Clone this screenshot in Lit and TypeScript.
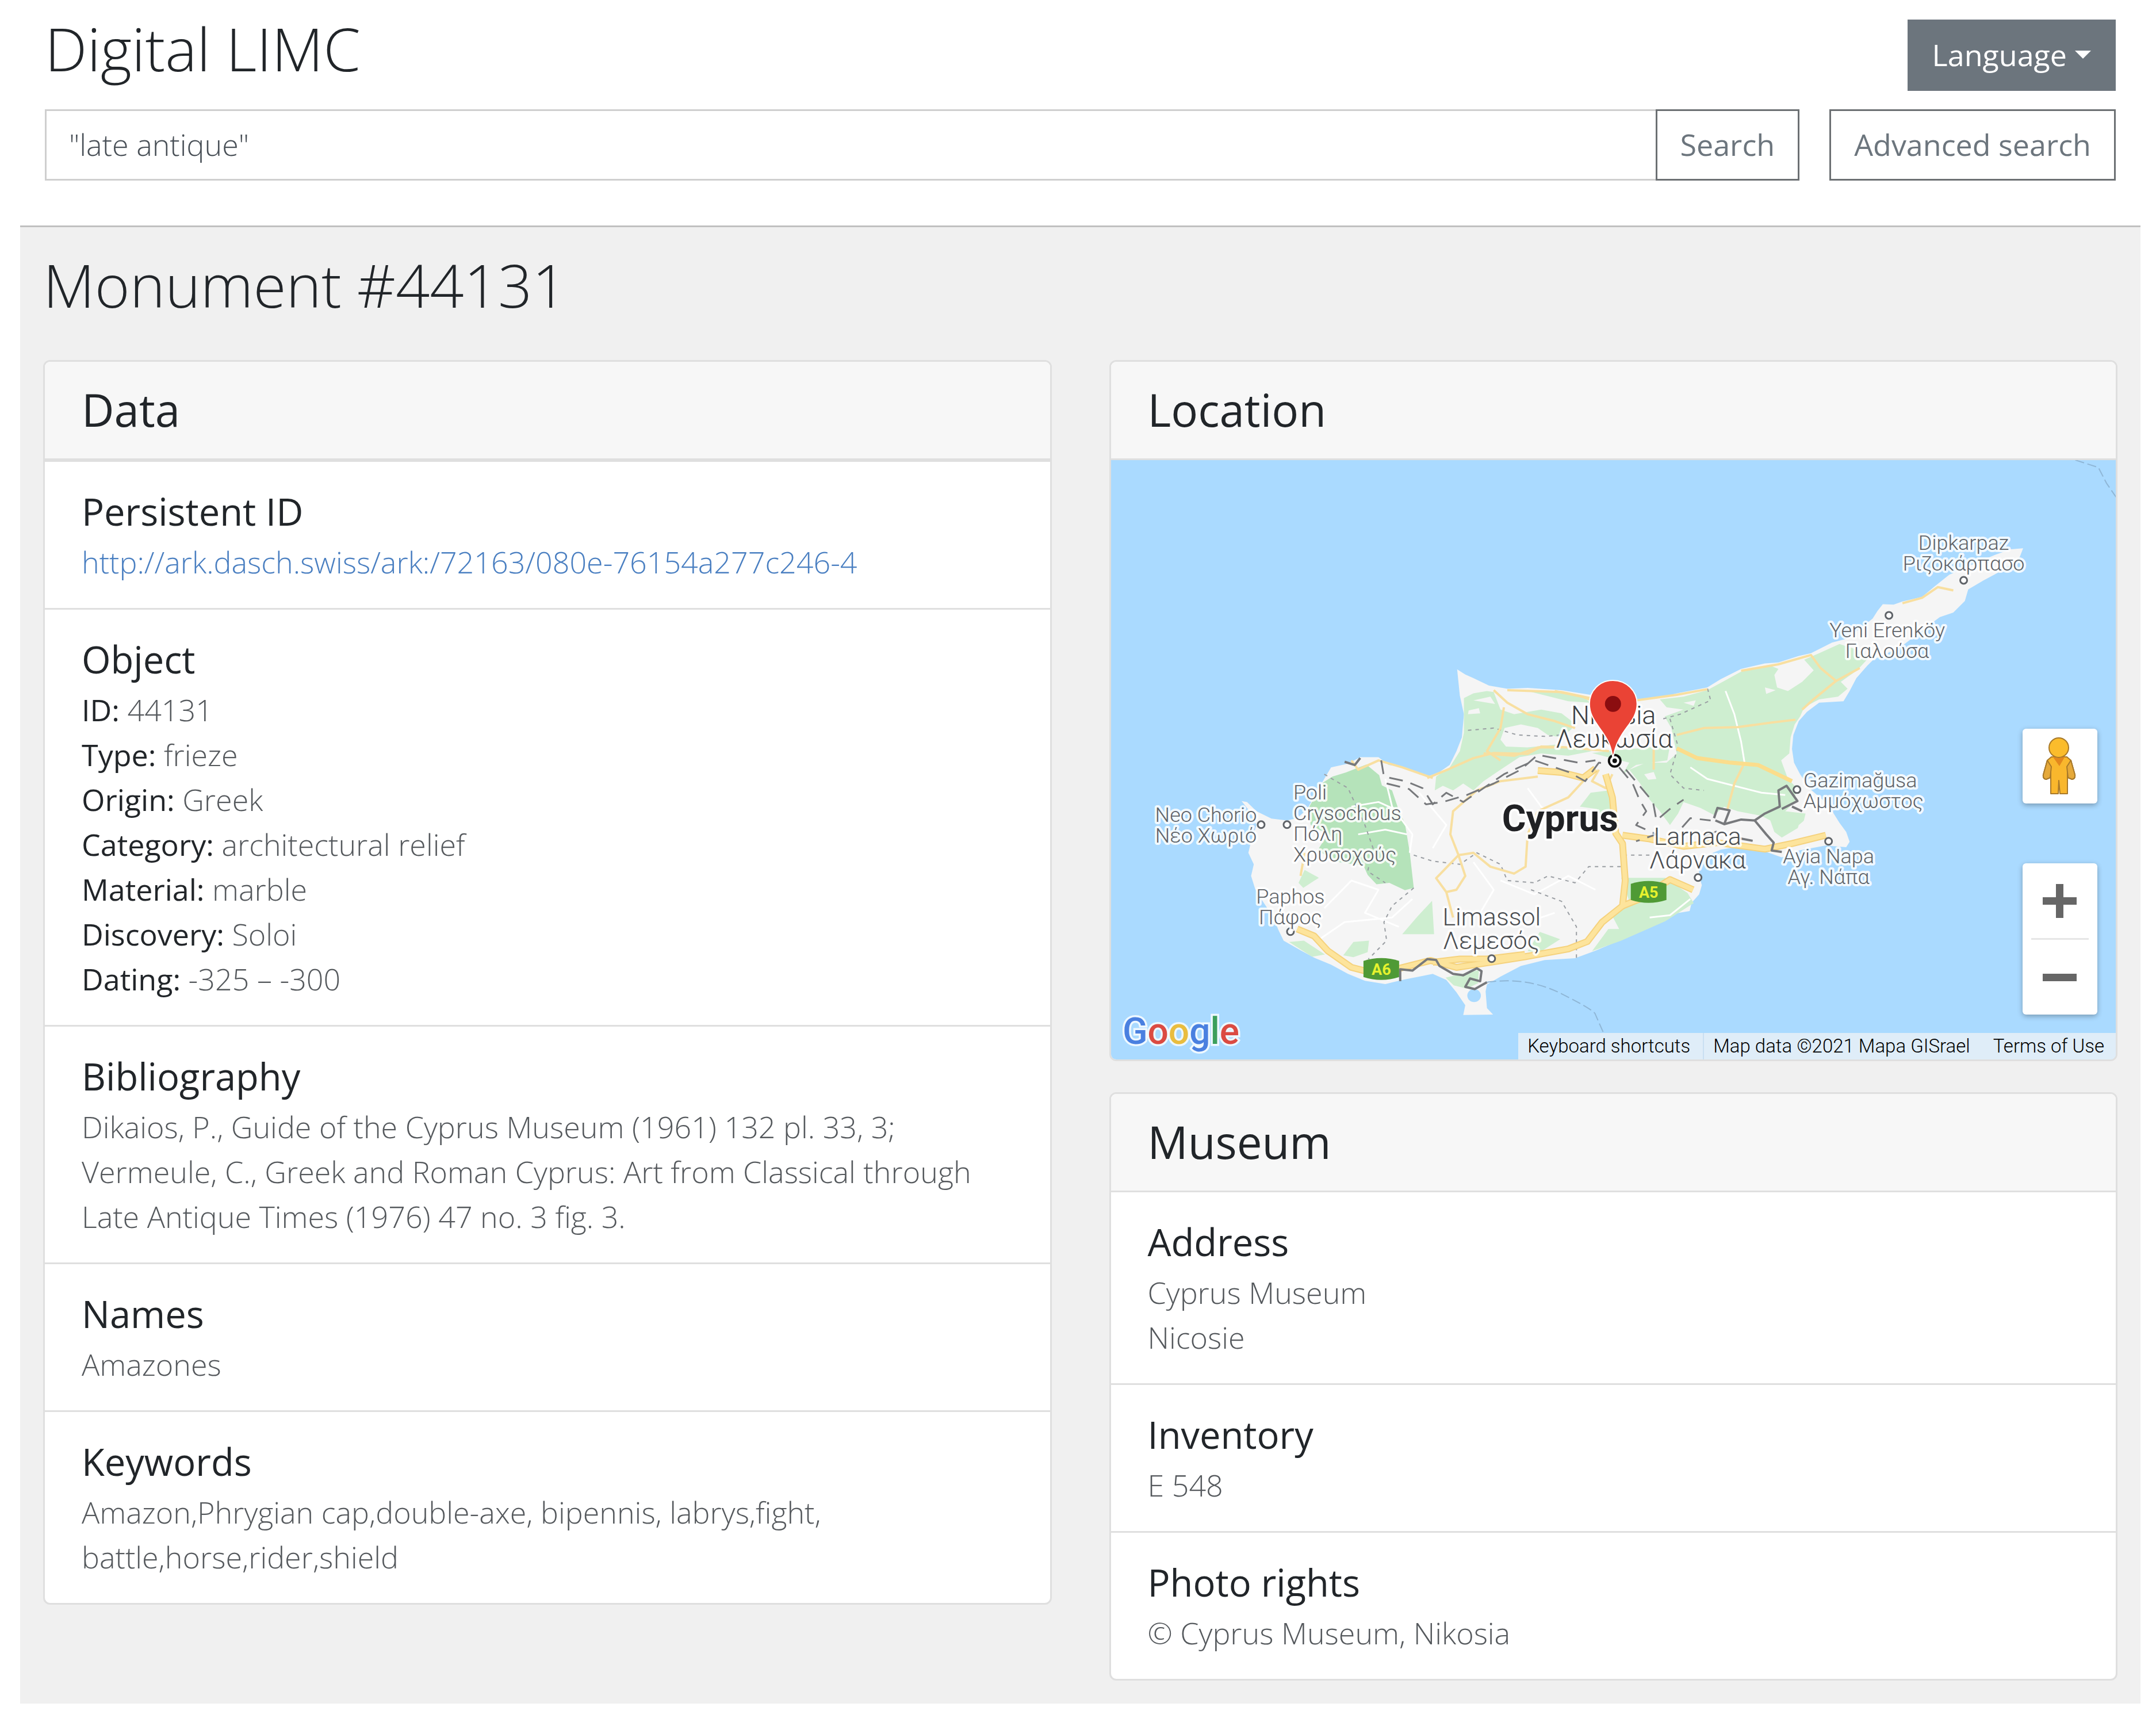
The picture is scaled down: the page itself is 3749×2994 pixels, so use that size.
import { LitElement, html, svg, css } from "lit";
import { customElement, property } from "lit/decorators.js";

interface Place {
  lines: string[];
  x: number;
  y: number;
  dot: [number, number];
  size?: "town" | "city";
  anchor?: "start" | "middle";
}

const PLACES: Place[] = [
  { lines: ["Dipkarpaz", "Ριζοκάρπασο"], x: 3413, y: 957, dot: [3413, 1010] },
  { lines: ["Yeni Erenköy", "Γιαλούσα"], x: 3280, y: 1109, dot: [3283, 1071] },
  { lines: ["Gazimağusa", "Αμμόχωστος"], x: 3134, y: 1370, dot: [3123, 1374], anchor: "start" },
  { lines: ["Ayia Napa", "Αγ. Νάπα"], x: 3178, y: 1502, dot: [3178, 1464] },
  { lines: ["Larnaca", "Λάρνακα"], x: 2950, y: 1470, dot: [2951, 1527], size: "city" },
  { lines: ["Limassol", "Λεμεσός"], x: 2592, y: 1610, dot: [2592, 1668], size: "city" },
  { lines: ["Paphos", "Πάφος"], x: 2242, y: 1572, dot: [2242, 1621] },
  { lines: ["Neo Chorio", "Νέο Χωριό"], x: 2095, y: 1430, dot: [2191, 1435] },
  { lines: ["Poli", "Crysochous", "Πόλη", "Χρυσοχούς"], x: 2247, y: 1391, dot: [2236, 1435], anchor: "start" },
];

const COAST =
  "M536 703L548 714 560 722 583 738 610 745 640 743 690 748 732 758 765 768 800 768 830 766 860 755 905 742 925 724 955 702 990 690 1010 688 1040 674 1058 668 1089 645 1110 637 1130 615 1149 593 1156 577 1164 562 1180 563 1193 556 1222 546 1240 524 1262 498 1290 480 1330 455 1353 443 1371 441 1366 460 1345 485 1312 511 1290 530 1285 555 1268 580 1248 590 1230 610 1190 655 1150 682 1141 695 1125 722 1115 750 1106 772 1070 775 1052 795 1040 815 1032 845 1030 875 1033 905 1042 930 1057 962 1075 985 1089 1009 1100 1035 1110 1055 1115 1076 1110 1088 1080 1084 1040 1095 1015 1110 990 1097 950 1087 925 1093 905 1105 893 1128 893 1150 897 1170 893 1190 882 1208 879 1226 855 1232 825 1254 775 1290 740 1312 710 1328 665 1332 630 1345 600 1368 580 1385 578 1400 580 1436 589 1450 545 1451 548 1430 535 1402 520 1375 500 1362 480 1368 455 1375 430 1384 400 1377 375 1362 350 1342 325 1327 305 1311 280 1290 272 1266 265 1240 247 1200 238 1178 232 1150 236 1125 228 1100 232 1075 240 1040 230 1010 218 988 226 990 240 1010 262 1026 285 1030 300 1025 315 1005 330 965 338 945 350 915 375 907 393 893 420 893 435 910 460 915 480 930 492 935 510 925 525 910 535 880 543 850 546 800 540 760Z";

const GREENS = [
  "M546 765L560 755 580 750 590 752 596 775 600 790 620 800 640 795 660 790 690 798 705 815 705 832 690 850 670 845 655 830 630 822 606 830 600 855 608 870 640 872 680 866 735 880 700 890 660 885 628 893 600 920 575 945 560 965 545 950 530 965 515 955 503 965 505 935 525 915 540 880 546 840Z",
  "M640 750L690 753 725 765 732 775 700 772Z",
  "M835 768L870 762 905 748 930 728 955 708 1000 696 1010 702 1004 715 1008 742 1024 750 1045 730 1062 705 1048 682 1070 668 1100 648 1130 662 1142 680 1126 705 1102 730 1112 745 1098 762 1070 768 1048 785 1042 805 1034 822 1028 850 1026 885 1014 900 1024 940 1036 958 1034 990 1020 1010 1050 1015 1046 1040 1015 1067 1004 1055 998 1030 985 1020 950 1010 930 1000 915 1018 895 1003 870 990 862 1015 850 1040 835 1010 820 985 806 950 790 920 815 905 845 905 860 885 852 830 842 805 870 790 845 785Z",
  "M735 884L770 878 850 868 846 900 800 910 780 930 790 905Z",
  "M311 1137L332 1154 309 1176 302 1165Z",
  "M368 1322L383 1293 406 1290 404 1315 383 1326Z",
  "M455 1276L478 1237 499 1204 502 1276Z",
  "M778 1154L843 1154 876 1187 885 1209 843 1248 778 1290 735 1313 759 1265 775 1265 765 1237 791 1209Z",
  "M658 1271L688 1287 658 1315 640 1313Z",
  "M717 1000L733 970 759 965 767 1015 748 1018 742 1005Z",
  "M288 1293L310 1290 341 1320 322 1325Z",
  "M519 1370L568 1354 567 1382 550 1394 531 1387Z",
];

const LAND_PATCHES = [
  "M553 792L568 787 570 798 552 800Z",
  "M560 770L585 762 592 778Z",
  "M618 760L650 775 640 785 616 780Z",
  "M870 775L888 770 885 782Z",
  "M990 742L1006 748 992 756Z",
  "M1040 1040L1060 1015 1068 1030 1035 1062Z",
  "M812 930L826 925 830 940 818 942Z",
];

const FORESTS = [
  "M338 948L352 935 372 926 402 909 421 932 425 954 440 965 449 1004 459 1037 466 1098 472 1176 459 1181 436 1165 417 1168 404 1148 398 1128 360 1120 330 1095 345 1060 320 1040 316 1005Z",
];

const HIGHWAYS = [
  "M300 1265L325 1280 345 1312 380 1348 425 1365 451 1350 497 1333 535 1348 585 1337 636 1325 700 1308 728 1292 750 1250 780 1215 784 1160 780 1080 770 1058 765 980 755 930",
  "M500 1337L540 1330 580 1330 636 1320",
  "M780 1062L820 1070 870 1086 920 1078 990 1092 1030 1080 1080 1062",
  "M780 1215L805 1200 850 1158 884 1180",
  "M655 922L690 926 722 938 740 918",
];

const ROADS = [
  "M492 938L525 918 560 895 590 884 640 886 660 870 700 872 760 880",
  "M575 885L620 890 655 872 680 872",
  "M590 748L610 775 640 800 680 815 710 830",
  "M680 750L720 762 745 776",
  "M610 748L690 752 735 766",
  "M800 770L860 758 905 746",
  "M860 845L900 830 950 828 1000 818 1035 812",
  "M955 706L1010 692 1058 672 1072 700 1095 728 1130 700",
  "M1095 728L1060 770 1045 790",
  "M1193 560L1222 548 1245 525 1268 532",
  "M380 900L390 920 420 900 455 915 500 938",
  "M655 935L600 945 565 965 530 1010 526 1060 538 1105 560 1100 585 1130 620 1145 637 1130 640 1060 655 1010",
  "M655 1010L700 980 722 945",
  "M538 1105L505 1155 520 1185 535 1180 548 1150 538 1105M520 1185L530 1240",
  "M605 785L600 830 580 880 600 900",
  "M826 870L826 920",
  "M960 905L945 950 935 1005",
  "M311 1100L305 1150",
  "M745 920L735 945 755 960 765 930",
];

const MAJOR_ROADS = ["M860 874L890 895 940 905 980 910 1030 945"];

const MINOR = [
  "M430 940L440 1000 470 1060 466 1100",
  "M340 1220L380 1160 420 1180 400 1230 450 1260",
  "M330 1290L370 1250 440 1240 470 1200",
  "M560 1120L590 1180 570 1230 620 1260 680 1230",
  "M480 970L520 1040 500 1090",
  "M600 1160L650 1190 700 1150 740 1180",
  "M640 960L660 1000 700 1040",
  "M932 750L945 800 955 860 960 905",
  "M880 915L905 940 985 970 1020 975",
  "M380 1000L420 990 450 1010M390 1060L430 1050 462 1060",
  "M820 1240L850 1235 880 1200",
];

const DISTRICTS = [
  "M552 835L590 830 625 845 665 848 690 845",
  "M840 810L865 800 910 770 905 742",
  "M850 810L862 870 850 930 870 960 900 965",
  "M472 1105L500 1118 540 1125 565 1100 600 1125 610 1160 650 1165 670 1150 710 1165 730 1130 780 1130 785 1105 820 1105",
  "M472 1176L440 1215 428 1250 432 1290 405 1330",
  "M645 1180L690 1205 712 1260 712 1330",
  "M340 930L375 960 400 1040 412 1090 404 1140 430 1165",
];

const BORDERS = [
  "M424 900L428 935 460 945 485 960 500 995 520 970 545 990 575 960 605 930 650 900 700 925 725 945 745 905 765 908",
  "M432 950L465 962 490 995 515 990 550 975 590 950 630 920 655 888 715 905 740 900",
  "M775 915L795 950 805 985 815 1010 800 1040 830 1060 800 1075",
  "M785 920L808 960 825 990 830 1030 850 1005 870 985",
  "M868 1045L880 1025 910 1030M900 1065L925 1050",
];

const BASES = [
  "M370 903L385 910 393 895",
  "M452 1378L452 1352 470 1355 492 1330 505 1332 510 1345 530 1362 545 1365 565 1350 572 1356 570 1378 555 1372 548 1390 562 1395 580 1380",
  "M915 1025L920 1003 938 1008 930 1038 917 1030M930 1038L955 1028 975 1030 990 1015 1012 1000 1010 965 1022 955 1038 988 1015 1005M1030 1000L1045 1010",
  "M975 1030L992 1060 1003 1078 1000 1095 1015 1098",
  "M950 1068L972 1074",
];

@customElement("cyprus-map")
export class CyprusMap extends LitElement {
  static styles = css`
    :host {
      display: block;
      position: relative;
      font-family: Roboto, "Liberation Sans", sans-serif;
      background: #aadaff;
    }
    .canvas {
      display: block;
      width: 100%;
      height: auto;
    }
    .line {
      fill: none;
      vector-effect: non-scaling-stroke;
      stroke-linejoin: round;
    }
    .land { fill: #f5f5f5; }
    .water { fill: #aadaff; }
    .green { fill: #ceeed0; }
    .forest { fill: #b5e3ba; }
    .minor { stroke: #ffffff; stroke-width: 3px; }
    .road { stroke: #f8dfa0; stroke-width: 4px; }
    .major { stroke: #fbdd8c; stroke-width: 7px; }
    .highway-edge { stroke: #f5d27d; stroke-width: 12px; }
    .highway { stroke: #fde49c; stroke-width: 8px; }
    .district { stroke: #9a9ea3; stroke-width: 2px; stroke-dasharray: 6 7; }
    .border { stroke: #77797c; stroke-width: 3px; stroke-dasharray: 24 14; }
    .base { stroke: #77797c; stroke-width: 4px; }
    .sea-line { stroke: #8fb6d6; stroke-width: 2px; stroke-dasharray: 16 6; }
    .label {
      fill: #5f6368;
      stroke: #ffffff;
      stroke-opacity: 0.85;
      stroke-width: 8px;
      stroke-linejoin: round;
      paint-order: stroke;
      font-size: 36px;
    }
    .city { font-size: 43px; fill: #4b4e52; }
    .capital { font-size: 45px; fill: #3c4043; }
    .country { font-size: 64px; font-weight: 700; fill: #202124; }
    .dot { fill: #ffffff; stroke: #5f6368; stroke-width: 3px; }
    .shield { fill: #4f9a35; }
    .shield-text { fill: #e6f22e; font-size: 27px; font-weight: 700; }
    .logo {
      font-size: 64px;
      font-weight: 500;
      stroke: #ffffff;
      stroke-opacity: 0.8;
      stroke-width: 7px;
      paint-order: stroke;
    }
    .g-blue { fill: #4a80e0; }
    .g-red { fill: #db4b42; }
    .g-yellow { fill: #e9bd3f; }
    .g-green { fill: #3c9f5b; }
    .controls {
      position: absolute;
      right: 32px;
      bottom: 78px;
      display: flex;
      flex-direction: column;
      gap: 104px;
    }
    .group {
      background: #ffffff;
      border-radius: 6px;
      box-shadow: 0 3px 10px rgba(0, 0, 0, 0.3);
      display: flex;
      flex-direction: column;
      align-items: center;
    }
    .control {
      width: 130px;
      height: 130px;
      padding: 0;
      border: 0;
      background: none;
      display: block;
      cursor: pointer;
    }
    .rule {
      width: 100px;
      height: 3px;
      background: #e6e6e6;
    }
    .glyph { display: block; width: 100%; height: 100%; }
    .attribution {
      position: absolute;
      right: 0;
      bottom: 0;
      height: 46px;
      display: flex;
      align-items: center;
      background: rgba(245, 245, 245, 0.7);
      font-size: 33px;
      line-height: 46px;
      color: #000000;
      white-space: nowrap;
    }
    .legal {
      font: inherit;
      color: inherit;
      background: none;
      border: 0;
      padding: 0 20px;
      text-decoration: none;
    }
    .legal:first-child {
      padding: 0 22px 0 16px;
      border-right: 2px solid #c9dff2;
    }
    .legal:nth-child(2) { padding: 0 20px 0 16px; }
  `;

  private lines(list: string[], cls: string) {
    return list.map((d) => svg`<path class="line ${cls}" d=${d}></path>`);
  }

  private areas(list: string[], cls: string) {
    return list.map((d) => svg`<path class=${cls} d=${d}></path>`);
  }

  private place(p: Place) {
    const step = p.size === "city" ? 41 : 36;
    return svg`
      <circle class="dot" cx=${p.dot[0]} cy=${p.dot[1]} r="6"></circle>
      ${p.lines.map(
        (text, i) => svg`<text class="label ${p.size ?? "town"}" x=${p.x} y=${p.y + i * step}
          text-anchor=${p.anchor ?? "middle"}>${text}</text>`
      )}`;
  }

  private shield(x: number, y: number, text: string) {
    return svg`
      <path class="shield" d="M${x - 31} ${y - 14}Q${x} ${y - 24} ${x + 31} ${y - 14}V${y + 14}Q${x} ${y + 24} ${x - 31} ${y + 14}Z"></path>
      <text class="shield-text" x=${x} y=${y + 10} text-anchor="middle">${text}</text>`;
  }

  render() {
    return html`
      <svg class="canvas" viewBox="1930 801 1748 1042" role="img" aria-label="Map of Cyprus">
        <g transform="translate(1900 600) scale(1.179 0.8036)">
          <path class="land" d=${COAST}></path>
          ${this.areas(GREENS, "green")}
          ${this.areas(LAND_PATCHES, "land")}
          ${this.areas(FORESTS, "forest")}
          <ellipse class="water" cx="561" cy="1409" rx="10" ry="14"></ellipse>
          ${this.lines(MINOR, "minor")}
          ${this.lines(DISTRICTS, "district")}
          ${this.lines(ROADS, "road")}
          ${this.lines(MAJOR_ROADS, "major")}
          ${this.lines(HIGHWAYS, "highway-edge")}
          ${this.lines(HIGHWAYS, "highway")}
          ${this.lines(BORDERS, "border")}
          ${this.lines(BASES, "base")}
          <path class="line sea-line" d="M580 1380Q640 1368 690 1405T740 1450L752 1490"></path>
          <path class="line sea-line" d="M1448 250L1482 266 1494 300 1508 330"></path>
        </g>
        ${PLACES.map((p) => this.place(p))}
        ${this.shield(2865, 1552, "A5")}
        ${this.shield(2400, 1686, "A6")}
        <text class="label country" x="2711" y="1446" text-anchor="middle">Cyprus</text>
        <text class="label capital" x="2804" y="1260" text-anchor="middle">Nicosia</text>
        <text class="label capital" x="2805" y="1301" text-anchor="middle">Λευκωσία</text>
        <circle cx="2806" cy="1324" r="10" fill="#ffffff" stroke="#111111" stroke-width="4"></circle>
        <circle cx="2806" cy="1324" r="4" fill="#111111"></circle>
        <path
          d="M2803 1184C2780 1184 2762 1202 2762 1225C2762 1246 2774 1258 2786 1276C2797 1292 2800 1302 2803 1320C2806 1302 2810 1292 2820 1276C2832 1258 2845 1246 2845 1225C2845 1202 2826 1184 2803 1184Z"
          fill="#ea4335" stroke="#ffffff" stroke-width="2"></path>
        <circle cx="2803" cy="1225" r="14" fill="#8b0d10"></circle>
        <text class="logo" x="1950" y="1816"><tspan class="g-blue">G</tspan><tspan class="g-red">o</tspan><tspan class="g-yellow">o</tspan><tspan class="g-blue">g</tspan><tspan class="g-green">l</tspan><tspan class="g-red">e</tspan></text>
      </svg>
      <div class="controls">
        <div class="group">
          <button class="control" type="button" aria-label="Street View">
            <svg class="glyph" viewBox="0 0 130 130">
              <g stroke="#a8792a" stroke-width="2" stroke-linejoin="round">
                <path fill="#f9b72d" d="M50 49L43 55 36 80Q35 87 41 88L48 85 49 74V113H62L63 90 65 113H78V74L79 85 86 88Q92 87 91 80L84 55 77 49Z"></path>
                <path fill="#e5a93a" d="M43 55L36 80Q35 87 41 88L48 85 50 66ZM84 55L91 80Q92 87 86 88L79 85 77 66Z"></path>
                <circle fill="#fbbc2c" cx="63" cy="33" r="17"></circle>
              </g>
              <path fill="#e3871d" d="M52 48Q63 54 74 48L64 65Z"></path>
            </svg>
          </button>
        </div>
        <div class="group">
          <button class="control" type="button" aria-label="Zoom in">
            <svg class="glyph" viewBox="0 0 130 130"><path fill="#666666" d="M35 59H58V36H71V59H94V72H71V95H58V72H35Z"></path></svg>
          </button>
          <div class="rule"></div>
          <button class="control" type="button" aria-label="Zoom out">
            <svg class="glyph" viewBox="0 0 130 130"><path fill="#666666" d="M35 59H94V72H35Z"></path></svg>
          </button>
        </div>
      </div>
      <div class="attribution">
        <button class="legal" type="button">Keyboard shortcuts</button>
        <span class="legal">Map data ©2021 Mapa GISrael</span>
        <a class="legal" href="#terms">Terms of Use</a>
      </div>
    `;
  }
}

@customElement("info-card")
export class InfoCard extends LitElement {
  @property() heading = "";

  static styles = css`
    :host {
      display: block;
      box-sizing: border-box;
      border: 3px solid #dfdfdf;
      border-radius: 12px;
      background: #ffffff;
      overflow: hidden;
    }
    .head {
      padding: 36px 64px 38px;
      background: #f7f7f7;
      border-bottom: 3px solid #dfdfdf;
    }
    .title {
      margin: 0;
      font-size: 78px;
      line-height: 94px;
      font-weight: 400;
      color: #212529;
    }
  `;

  render() {
    return html`
      <header class="head"><h2 class="title">${this.heading}</h2></header>
      <slot></slot>
    `;
  }
}

@customElement("app-root")
export class AppRoot extends LitElement {
  static styles = css`
    :host {
      display: block;
      box-sizing: border-box;
      padding: 34px 27px 33px 35px;
      background: #ffffff;
      font-family: "Open Sans", "Noto Sans", sans-serif;
      font-size: 52px;
      line-height: 78px;
      font-weight: 300;
      color: #212529;
    }
    .top {
      padding: 0 43px 78px;
      display: flex;
      flex-direction: column;
      gap: 32px;
    }
    .brand-row {
      display: flex;
      justify-content: space-between;
      align-items: flex-start;
    }
    .brand {
      margin: 0;
      font-size: 104px;
      line-height: 100px;
      font-weight: 300;
    }
    .button {
      box-sizing: border-box;
      height: 124px;
      padding: 0 40px 3px;
      border: 3px solid #6c7073;
      border-radius: 0;
      background: #ffffff;
      color: #6c757d;
      font: inherit;
      font-weight: 400;
      white-space: nowrap;
      cursor: pointer;
    }
    .language {
      display: flex;
      align-items: center;
      gap: 14px;
      background: #6c757d;
      border-color: #6c757d;
      color: #ffffff;
    }
    .caret {
      border: 14px solid transparent;
      border-top-color: #ffffff;
      border-bottom: 0;
    }
    .search {
      display: flex;
      gap: 52px;
    }
    .field {
      flex: 1;
      display: flex;
    }
    .query {
      flex: 1;
      min-width: 0;
      box-sizing: border-box;
      height: 124px;
      padding: 0 39px 3px;
      border: 3px solid #cfcfcf;
      border-right: 0;
      border-radius: 0;
      font: inherit;
      color: #495057;
      background: #ffffff;
      outline: 0;
    }
    .content {
      padding: 37px 40px 40px;
      border-top: 3px solid #c0c0c0;
      background: #f0f0f0;
    }
    .page-title {
      margin: 0 0 69px;
      font-size: 104px;
      line-height: 125px;
      font-weight: 300;
    }
    .columns {
      display: grid;
      grid-template-columns: 1fr 1fr;
      gap: 100px;
      align-items: start;
    }
    .stack {
      display: flex;
      flex-direction: column;
      gap: 54px;
    }
    .item {
      padding: 47px 64px 41px;
      border-top: 3px solid #dfdfdf;
      color: #55595d;
    }
    .flush > .item:first-of-type {
      border-top: 0;
    }
    .name {
      margin: 0 0 10px;
      font-size: 65px;
      line-height: 78px;
      font-weight: 400;
      color: #212529;
    }
    .text,
    .facts,
    .value {
      margin: 0;
    }
    .label {
      display: inline;
      font-weight: 400;
      color: #212529;
    }
    .value {
      display: inline;
    }
    .link {
      color: #4a7fc1;
      text-decoration: none;
    }
  `;

  private facts: [string, string][] = [
    ["ID", "44131"],
    ["Type", "frieze"],
    ["Origin", "Greek"],
    ["Category", "architectural relief"],
    ["Material", "marble"],
    ["Discovery", "Soloi"],
    ["Dating", "-325 – -300"],
  ];

  private item(name: string, body: unknown) {
    return html`<section class="item"><h3 class="name">${name}</h3>${body}</section>`;
  }

  private text(...lines: string[]) {
    return lines.map((line) => html`<p class="text">${line}</p>`);
  }

  render() {
    return html`
      <header class="top">
        <div class="brand-row">
          <h1 class="brand">Digital LIMC</h1>
          <button class="button language" type="button" aria-haspopup="menu">
            Language<span class="caret"></span>
          </button>
        </div>
        <form class="search" role="search" @submit=${(e: Event) => e.preventDefault()}>
          <div class="field">
            <input class="query" type="text" aria-label="Search query" .value=${'"late antique"'} />
            <button class="button" type="submit">Search</button>
          </div>
          <button class="button" type="button">Advanced search</button>
        </form>
      </header>
      <main class="content">
        <h2 class="page-title">Monument #44131</h2>
        <div class="columns">
          <info-card heading="Data">
            ${this.item(
              "Persistent ID",
              html`<a class="link" href="http://ark.dasch.swiss/ark:/72163/080e-76154a277c246-4"
                >http://ark.dasch.swiss/ark:/72163/080e-76154a277c246-4</a
              >`
            )}
            ${this.item(
              "Object",
              html`<dl class="facts">
                ${this.facts.map(
                  ([label, value]) => html`<div><dt class="label">${label}:</dt> <dd class="value">${value}</dd></div>`
                )}
              </dl>`
            )}
            ${this.item(
              "Bibliography",
              this.text(
                "Dikaios, P., Guide of the Cyprus Museum (1961) 132 pl. 33, 3;",
                "Vermeule, C., Greek and Roman Cyprus: Art from Classical through Late Antique Times (1976) 47 no. 3 fig. 3."
              )
            )}
            ${this.item("Names", this.text("Amazones"))}
            ${this.item(
              "Keywords",
              this.text("Amazon,Phrygian cap,double-axe, bipennis, labrys,fight, battle,horse,rider,shield")
            )}
          </info-card>
          <div class="stack">
            <info-card heading="Location"><cyprus-map></cyprus-map></info-card>
            <info-card class="flush" heading="Museum">
              ${this.item("Address", this.text("Cyprus Museum", "Nicosie"))}
              ${this.item("Inventory", this.text("E 548"))}
              ${this.item("Photo rights", this.text("© Cyprus Museum, Nikosia"))}
            </info-card>
          </div>
        </div>
      </main>
    `;
  }
}
